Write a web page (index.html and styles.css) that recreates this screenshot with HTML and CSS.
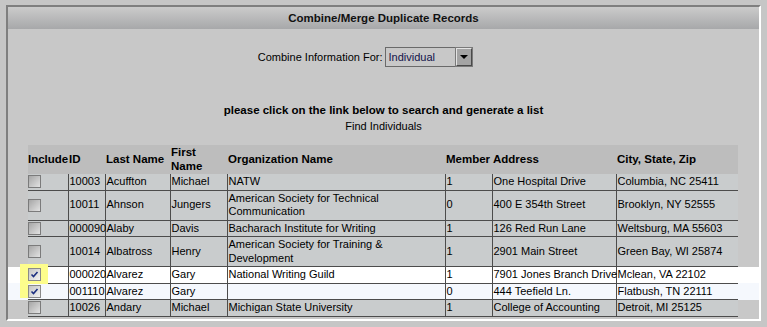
FILE: index.html
```html
<!DOCTYPE html>
<html lang="en">
<head>
    <meta charset="UTF-8">
    <meta name="viewport" content="width=device-width, initial-scale=1.0">
    <title>Combine/Merge Duplicate Records</title>
    <link rel="stylesheet" href="styles.css">
</head>
<body>
    <div class="panel">
        <div class="panel-title">Combine/Merge Duplicate Records</div>

        <div class="combine-row">
            <label class="combine-label">Combine Information For:</label>
            <div class="select">
                <span class="select-text">Individual</span>
                <span class="select-btn"><span class="arrow"></span></span>
            </div>
        </div>

        <p class="hint">please click on the link below to search and generate a list</p>
        <p class="find-link">Find Individuals</p>

        <table class="records">
            <colgroup>
                <col style="width: 20px">
                <col style="width: 40px">
                <col style="width: 37px">
                <col style="width: 65px">
                <col style="width: 57px">
                <col style="width: 218px">
                <col style="width: 47px">
                <col style="width: 124px">
                <col style="width: 122px">
                <col style="width: 21px">
            </colgroup>
            <thead>
                <tr>
                    <th class="edge"></th>
                    <th class="inc">Include</th>
                    <th>ID</th>
                    <th>Last Name</th>
                    <th>First Name</th>
                    <th>Organization Name</th>
                    <th>Member</th>
                    <th>Address</th>
                    <th>City, State, Zip</th>
                    <th class="edge"></th>
                </tr>
            </thead>
            <tbody>
                <tr>
                    <td class="edge"></td>
                    <td class="inc"><span class="chk"></span></td>
                    <td>10003</td>
                    <td>Acuffton</td>
                    <td>Michael</td>
                    <td class="org">NATW</td>
                    <td>1</td>
                    <td>One Hospital Drive</td>
                    <td>Columbia, NC 25411</td>
                    <td class="edge"></td>
                </tr>
                <tr>
                    <td class="edge"></td>
                    <td class="inc"><span class="chk"></span></td>
                    <td>10011</td>
                    <td>Ahnson</td>
                    <td>Jungers</td>
                    <td class="org">American Society for Technical Communication</td>
                    <td>0</td>
                    <td>400 E 354th Street</td>
                    <td>Brooklyn, NY 52555</td>
                    <td class="edge"></td>
                </tr>
                <tr>
                    <td class="edge"></td>
                    <td class="inc"><span class="chk"></span></td>
                    <td>000090</td>
                    <td>Alaby</td>
                    <td>Davis</td>
                    <td class="org">Bacharach Institute for Writing</td>
                    <td>1</td>
                    <td>126 Red Run Lane</td>
                    <td>Weltsburg, MA 55603</td>
                    <td class="edge"></td>
                </tr>
                <tr>
                    <td class="edge"></td>
                    <td class="inc"><span class="chk"></span></td>
                    <td>10014</td>
                    <td>Albatross</td>
                    <td>Henry</td>
                    <td class="org">American Society for Training &amp; Development</td>
                    <td>1</td>
                    <td>2901 Main Street</td>
                    <td>Green Bay, WI 25874</td>
                    <td class="edge"></td>
                </tr>
                <tr class="picked">
                    <td class="edge"></td>
                    <td class="inc">
                        <span class="marker"></span>
                        <span class="chk on"><svg width="11" height="11" viewBox="0 0 11 11"><path d="M2.5 5.5 L4.5 7.5 L8.5 3" fill="none" stroke="#1c2f80" stroke-width="1.6"/></svg></span>
                    </td>
                    <td>000020</td>
                    <td>Alvarez</td>
                    <td>Gary</td>
                    <td class="org">National Writing Guild</td>
                    <td>1</td>
                    <td>7901 Jones Branch Drive</td>
                    <td>Mclean, VA 22102</td>
                    <td class="edge"></td>
                </tr>
                <tr class="picked alt">
                    <td class="edge"></td>
                    <td class="inc">
                        <span class="chk on"><svg width="11" height="11" viewBox="0 0 11 11"><path d="M2.5 5.5 L4.5 7.5 L8.5 3" fill="none" stroke="#1c2f80" stroke-width="1.6"/></svg></span>
                    </td>
                    <td>001110</td>
                    <td>Alvarez</td>
                    <td>Gary</td>
                    <td class="org"></td>
                    <td>0</td>
                    <td>444 Teefield Ln.</td>
                    <td>Flatbush, TN 22111</td>
                    <td class="edge"></td>
                </tr>
                <tr>
                    <td class="edge"></td>
                    <td class="inc"><span class="chk"></span></td>
                    <td>10026</td>
                    <td>Andary</td>
                    <td>Michael</td>
                    <td class="org">Michigan State University</td>
                    <td>1</td>
                    <td>College of Accounting</td>
                    <td>Detroit, MI 25125</td>
                    <td class="edge"></td>
                </tr>
            </tbody>
        </table>
    </div>
</body>
</html>
```

FILE: styles.css
```css
body {
    margin: 0;
    padding: 5px 6px 6px 6px;
    background-color: #c6c6c6;
    font-family: "Liberation Sans", Arial, sans-serif;
    font-size: 11px;
    color: #000;
}
.panel {
    height: 312px;
    background-color: #c8c8c8;
    border: 2px solid;
    border-color: #7f7f7f #fff #fff #7f7f7f;
}
.panel-title {
    height: 22px;
    line-height: 22px;
    text-align: center;
    font-size: 11.5px;
    font-weight: bold;
    color: #111;
    background: linear-gradient(#cbcbcb, #a7a8aa);
}
.combine-row {
    display: grid;
    grid-template-columns: 1fr 1fr;
    column-gap: 2px;
    align-items: center;
    margin-top: 18px;
}
.combine-label {
    text-align: right;
}
.select {
    display: flex;
    align-items: center;
    width: 88px;
    height: 20px;
    box-sizing: border-box;
    border: 1px solid #6a6a6a;
}
.select-text {
    flex: 1;
    padding-left: 3px;
    color: #12124a;
}
.select-btn {
    display: flex;
    align-items: center;
    justify-content: center;
    width: 16px;
    height: 18px;
    box-sizing: border-box;
    background-color: #a4a4a4;
    border: 1px solid;
    border-color: #e4e4e4 #4a4a4a #4a4a4a #e4e4e4;
    outline: 1px solid #7a7a7a;
}
.arrow {
    width: 0;
    height: 0;
    border-left: 4px solid transparent;
    border-right: 4px solid transparent;
    border-top: 4px solid #000;
}
.hint {
    margin: 35px 0 0 0;
    line-height: 16px;
    text-align: center;
    font-size: 11.5px;
    font-weight: bold;
}
.find-link {
    margin: 0;
    line-height: 16px;
    text-align: center;
}
.records {
    width: 100%;
    margin-top: 11px;
    border-collapse: collapse;
    table-layout: fixed;
}
.records th,
.records td {
    padding: 1px 0 1px 1px;
    line-height: 13.5px;
    text-align: left;
    vertical-align: middle;
    white-space: nowrap;
}
.records th {
    background-color: #bdbdbd;
    font-size: 11.5px;
    font-weight: bold;
    white-space: normal;
}
.records td {
    background-color: #c9cccd;
    border-left: 1px solid #4c4c4c;
    border-bottom: 1px solid #4c4c4c;
}
.records td.org {
    white-space: normal;
}
.records .inc {
    padding-left: 0;
    border-left: none;
}
.records th.edge,
.records td.edge {
    background-color: transparent;
    border: none;
}
.records tr.picked td,
.records tr.picked td.edge {
    background-color: #fff;
}
.records tr.picked.alt td,
.records tr.picked.alt td.edge {
    background-color: #f5f8fd;
}
.records td.inc {
    position: relative;
}
.chk {
    position: relative;
    z-index: 1;
    display: block;
    width: 13px;
    height: 13px;
    box-sizing: border-box;
    border: 1px solid #7b7b7b;
    background: linear-gradient(135deg, #a6a6a6, #e2e2e2);
}
.chk.on {
    border-color: #8a8a8a;
    background: linear-gradient(135deg, #c4c4c4, #f2f2f2);
}
.chk svg {
    display: block;
    margin: 0;
}
.marker {
    position: absolute;
    left: -8px;
    top: -3px;
    width: 28px;
    height: 34px;
    background-color: #fdfd8c;
}
```
